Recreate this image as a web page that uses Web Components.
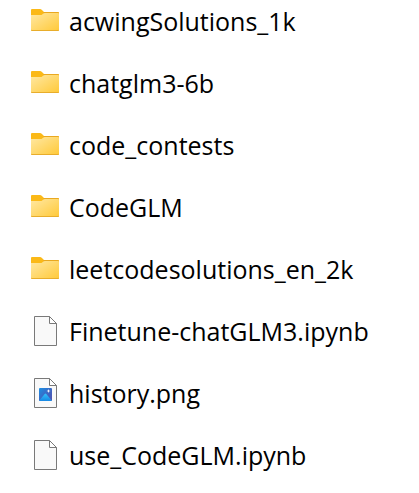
<!DOCTYPE html>
<html lang="en"><head><meta charset="utf-8"><title>Files</title>
<style>html,body{margin:0;background:#fff}</style></head><body>
<file-list>
<file-row kind="folder">acwingSolutions_1k</file-row>
<file-row kind="folder">chatglm3-6b</file-row>
<file-row kind="folder">code_contests</file-row>
<file-row kind="folder">CodeGLM</file-row>
<file-row kind="folder">leetcodesolutions_en_2k</file-row>
<file-row kind="file">Finetune-chatGLM3.ipynb</file-row>
<file-row kind="image">history.png</file-row>
<file-row kind="file">use_CodeGLM.ipynb</file-row>
</file-list>
<script>
const page = `<path d="M1.500 .5H16.500L23.500 7.500V29.500H1.500Z" fill="#f9f9f9" stroke="#797979"/><path d="M16.500 .5V7.500H23.500Z" fill="#fff" stroke="#797979"/>`;
const icons = {
folder:`<svg width="28" height="24" viewBox="0 0 28 24"><defs><linearGradient id="front" x1="0" y1="0" x2="1" y2="1"><stop offset="0" stop-color="#ffe8a3"/><stop offset="1" stop-color="#ffc938"/></linearGradient></defs><path d="M1 0H9Q10 0 10.700.7L13 3H27Q28 3 28 4V20H0V1Q0 0 1 0Z" fill="#fbb917"/><path d="M12.500 3H27Q28 3 28 4.500H12Z" fill="#e9a820"/><path d="M0 6H9.500Q10.500 6 11.200 5.400L12 4.700Q12.800 4 14 4H27Q28 4 28 5V21Q28 22 27 22H1Q0 22 0 21Z" fill="url(#front)"/><path d="M0 20.800Q0 22 1 22H27Q28 22 28 20.800L27 21H1Z" fill="#e8ad2b"/></svg>`,
file:`<svg width="24" height="30" viewBox="0 0 24 30">${page}</svg>`,
image:`<svg width="24" height="30" viewBox="0 0 24 30"><defs><linearGradient id="sky" x1="0" y1="0" x2="1" y2="1"><stop offset="0" stop-color="#1a91e5"/><stop offset=".5" stop-color="#3b68c4"/><stop offset="1" stop-color="#5450ae"/></linearGradient><linearGradient id="hill" x1="0" y1="0" x2="0" y2="1"><stop offset="0" stop-color="#35c3fb"/><stop offset="1" stop-color="#1687e4"/></linearGradient></defs>${page}<rect x="6" y="10" width="13" height="13" rx="1" fill="url(#sky)"/><path d="M6.300 22.500L11.500 16.200Q12.500 15 13.500 16.200L18.700 22.500Q18.500 23 18 23H7Q6.500 23 6.300 22.500Z" fill="url(#hill)"/><path d="M15.500 11L16 12.500L17.500 13L16 13.500L15.500 15L15 13.500L13.500 13L15 12.500Z" fill="#fff"/></svg>`};
class FileList extends HTMLElement{constructor(){super();this.attachShadow({mode:'open'}).innerHTML=`<style>:host{display:flex;flex-direction:column;gap:20px;padding-left:31px;font:25px "Open Sans","Noto Sans",sans-serif;color:#000}</style><slot></slot>`}}
class FileRow extends HTMLElement{constructor(){super();this.attachShadow({mode:'open'}).innerHTML=`<style>:host{display:flex;align-items:center;gap:10px;height:42px;white-space:nowrap}.icon{width:28px;display:flex;justify-content:center}</style><span class="icon">${icons[this.getAttribute('kind')]}</span><slot></slot>`}}
customElements.define('file-list',FileList);customElements.define('file-row',FileRow);
</script></body></html>
